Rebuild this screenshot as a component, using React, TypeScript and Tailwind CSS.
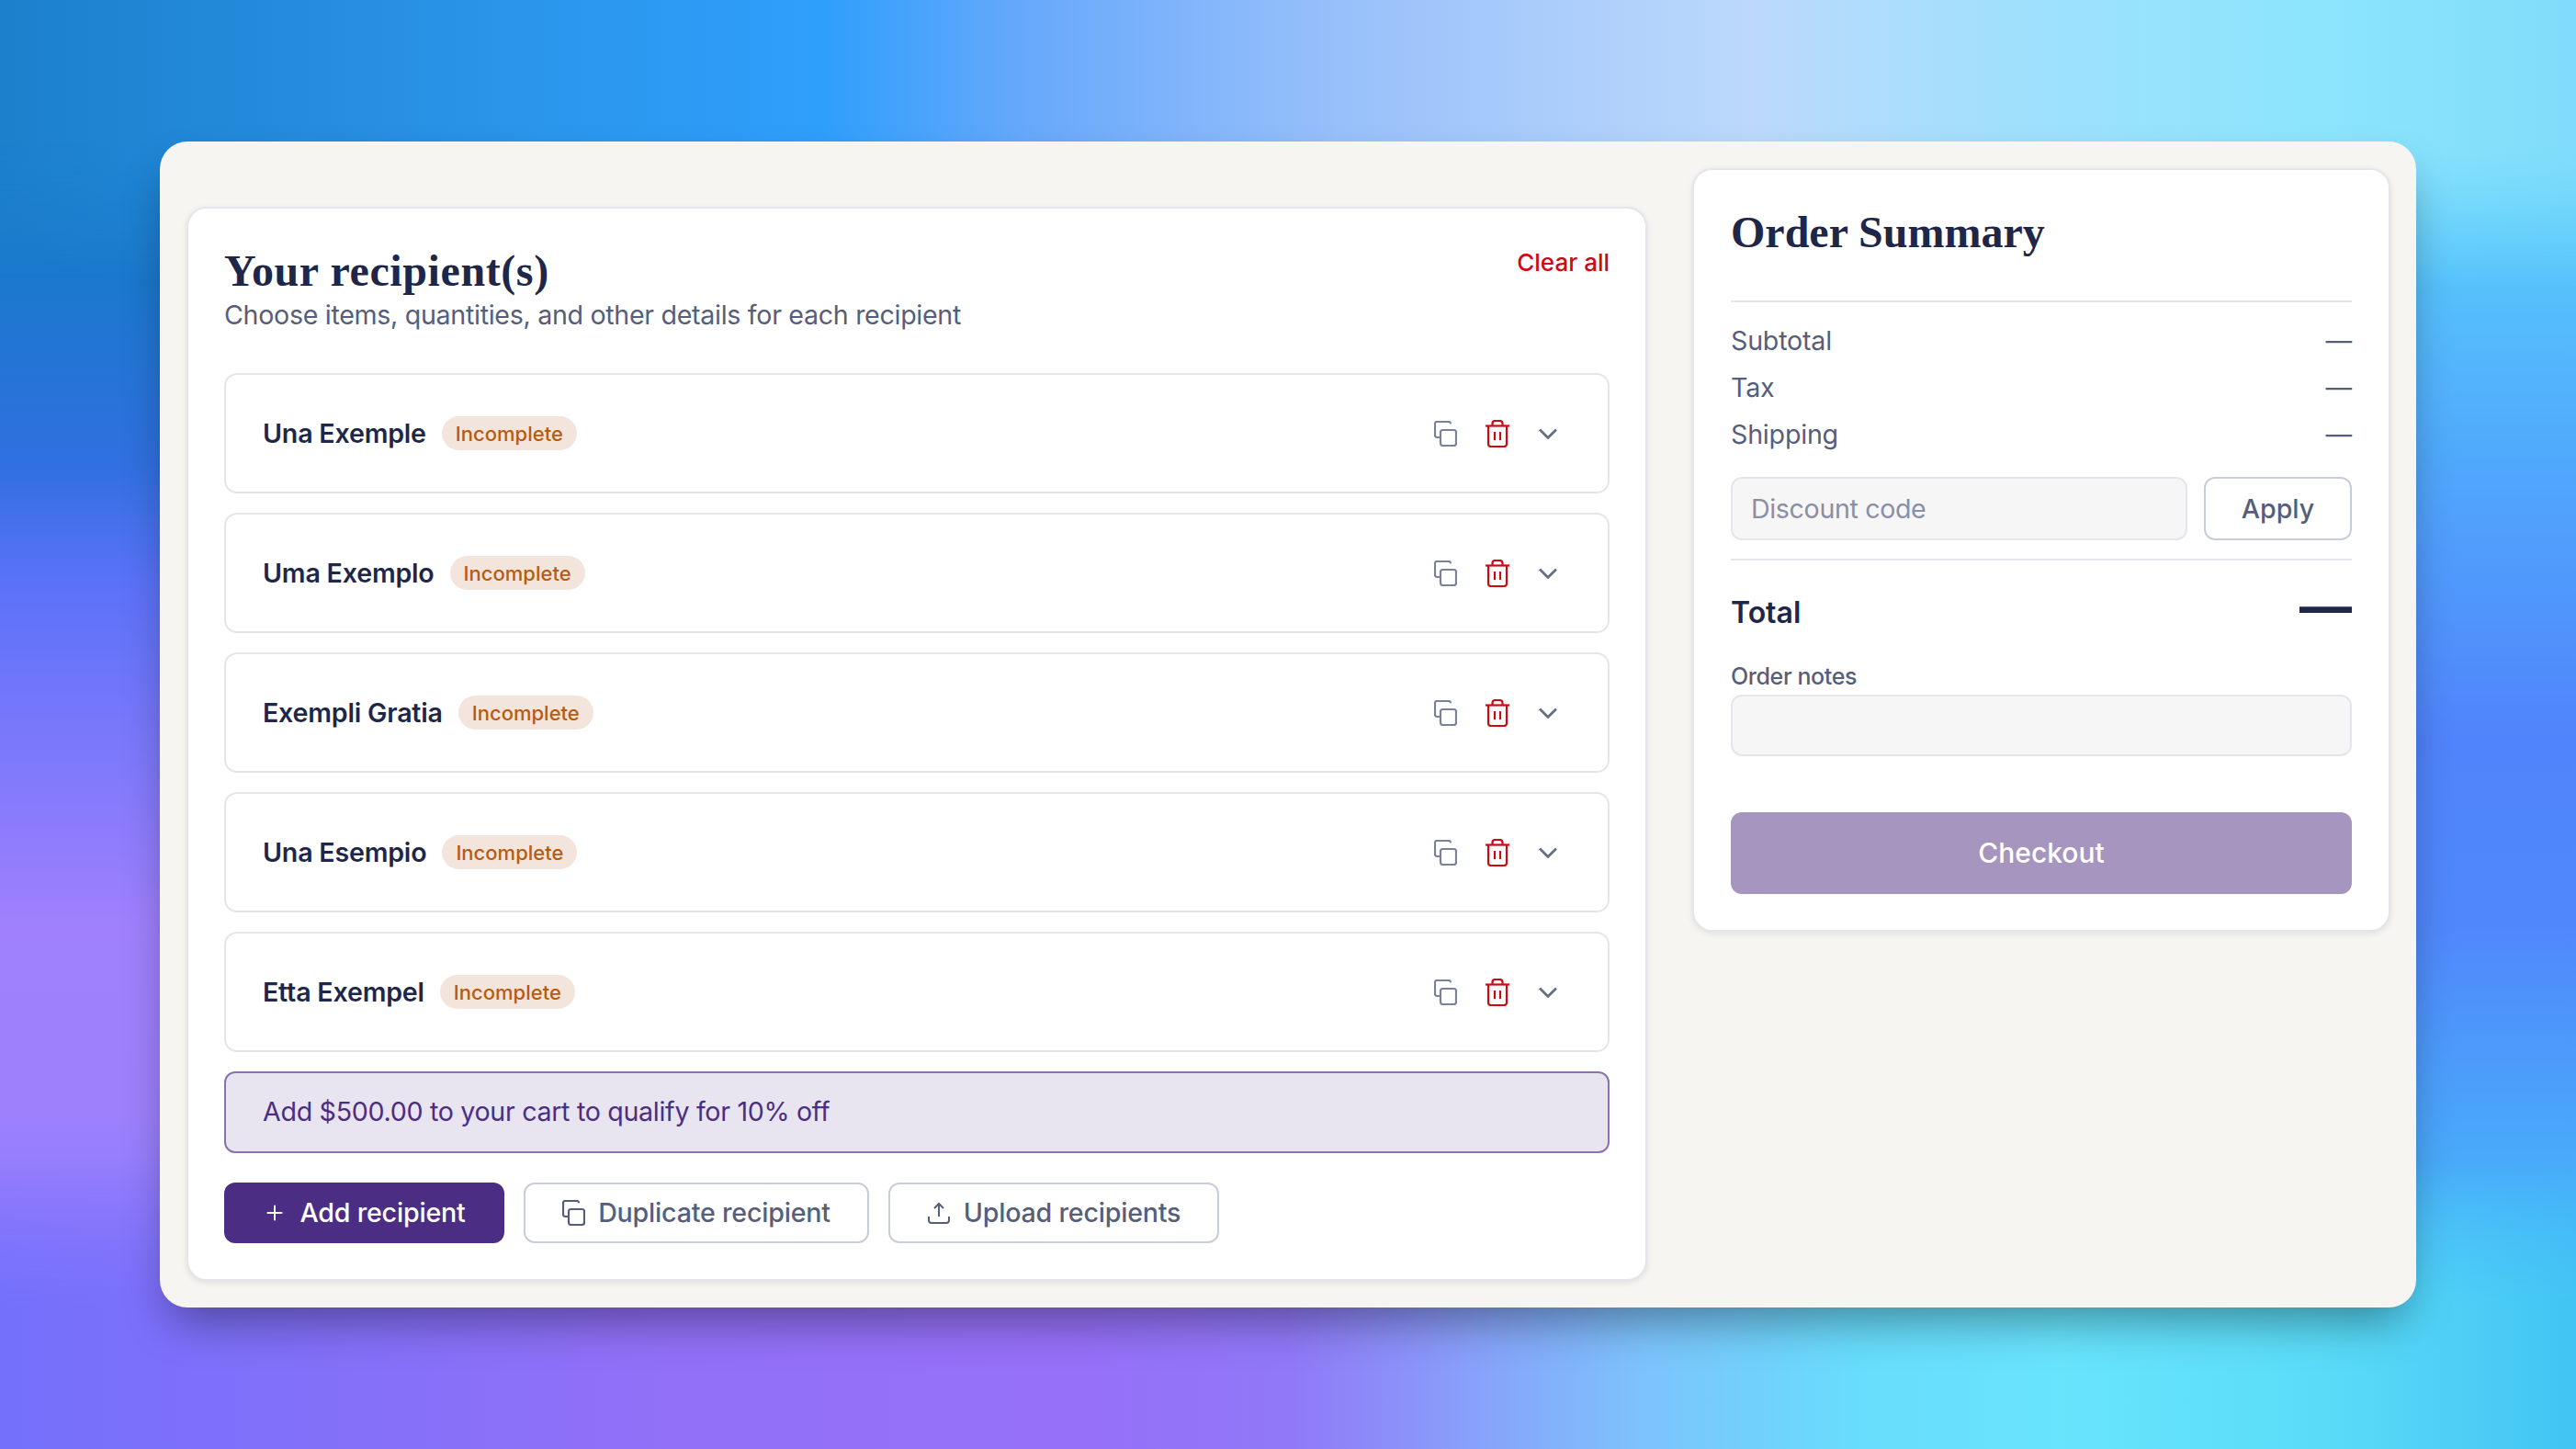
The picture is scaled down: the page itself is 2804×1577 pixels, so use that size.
import React from 'react';
import { Plus } from 'lucide-react';

const recipients = ['Una Exemple', 'Uma Exemplo', 'Exempli Gratia', 'Una Esempio', 'Etta Exempel'];

const CopyIcon = ({ className }: { className?: string }) => (
  <svg viewBox="0 0 25 28" fill="none" stroke="currentColor" strokeWidth="2.2" className={className}>
    <path d="M18 3.2C18 2 17 1 15.8 1H3.2C2 1 1 2 1 3.2v12.6C1 17 2 18 3.2 18H6" />
    <rect x="7" y="10" width="17" height="17" rx="2.4" />
  </svg>
);

const TrashIcon = () => (
  <svg viewBox="0 0 26 30" fill="none" stroke="currentColor" strokeWidth="2.2" className="w-[26px] h-[30px] text-[#cc0a14]">
    <path d="M0 6.5h26" />
    <path d="M7.5 6V4a3 3 0 0 1 3-3h5a3 3 0 0 1 3 3v2" />
    <path d="M3 6.5V26a3 3 0 0 0 3 3h14a3 3 0 0 0 3-3V6.5" />
    <path d="M10 13v9M16 13v9" />
  </svg>
);

const ChevronIcon = () => (
  <svg viewBox="0 0 20 12" fill="none" stroke="currentColor" strokeWidth="2.8" className="w-[20px] h-[12px] text-[#667085]">
    <path d="M1 1.5l9 9 9-9" />
  </svg>
);

const UploadIcon = () => (
  <svg viewBox="0 0 26 26" fill="none" stroke="currentColor" strokeWidth="2" className="w-[26px] h-[26px]">
    <path d="M13 17V3M8 8l5-5 5 5" />
    <path d="M2 17v4a3 3 0 0 0 3 3h16a3 3 0 0 0 3-3v-4" />
  </svg>
);

const RecipientRow = ({ name }: { name: string }) => (
  <div className="h-[131px] rounded-[14px] border-2 border-[#e5e5eb] bg-white pl-[40px] pr-[55px] flex items-center">
    <span className="text-[28.6px] leading-[40px] font-semibold text-[#1e2749] tracking-[-0.2px]">{name}</span>
    <span className="ml-[17px] h-[37px] px-[15px] rounded-full bg-[#f3e5db] text-[#b85a10] text-[22px] leading-[38px] font-medium">
      Incomplete
    </span>
    <div className="ml-auto flex items-center">
      <CopyIcon className="w-[25px] h-[28px] text-[#7a8299]" />
      <div className="ml-[31px]">
        <TrashIcon />
      </div>
      <div className="ml-[32px]">
        <ChevronIcon />
      </div>
    </div>
  </div>
);

const SummaryLine = ({ label }: { label: string }) => (
  <div className="h-[51px] flex items-center justify-between text-[28.6px] tracking-[-0.2px] text-[#565e7a]">
    <span>{label}</span>
    <span>—</span>
  </div>
);

export default function App() {
  return (
    <div className="relative w-full h-[1577px] overflow-hidden pl-[174px] pt-[154px] font-[Inter,sans-serif]">
      {/* background mesh */}
      <div className="absolute inset-0 flex">
        <div className="w-1/2 h-full bg-[linear-gradient(180deg,#1c84d0_0%,#1a78cc_19%,#3070e0_32%,#5a72f8_40%,#7a78fb_51%,#a080fd_64%,#9c80fc_77%,#8878fc_89%,#7470fc_100%)]" />
        <div className="w-1/2 h-full bg-[linear-gradient(180deg,#90e6fd_0%,#80e0fc_6%,#58c8fc_16%,#50a8fc_32%,#5084fc_51%,#5088fc_64%,#48b0fa_83%,#44c8f8_95%,#42c4f4_100%)]" />
      </div>
      <div className="absolute inset-0 bg-[linear-gradient(90deg,#1c80cc_0%,#2a95ea_20%,#2f9ffc_32%,#68a9fb_40%,#98c0fa_52%,#bcd9fc_68%,#a0e0fd_78%,#8ce5fd_90%,#80dcfa_100%)] [mask-image:linear-gradient(180deg,#000_0%,#000_10%,transparent_20%)]" />
      <div className="absolute inset-0 bg-[linear-gradient(90deg,#7470fc_0%,#8070fa_10%,#9270f8_26%,#9670f8_42%,#9078f8_50%,#88a0fa_57%,#7cc4fc_64%,#68dcfc_72%,#68e4fd_80%,#5adcf8_90%,#42c4f4_100%)] [mask-image:linear-gradient(180deg,transparent_80%,#000_90%,#000_100%)]" />

      <div className="relative w-[2456px] h-[1269px] rounded-[30px] bg-[#f6f5f1] pl-[29px] pt-[29px] flex items-start gap-[49px] shadow-[0_25px_50px_-12px_rgba(0,0,0,0.4)]">
        {/* Recipients */}
        <div className="w-[1590px] mt-[42px] rounded-[22px] border-2 border-[#e5e5eb] bg-white px-[39px] pt-[40px] pb-[39px] shadow-[0_2px_6px_rgba(30,30,60,0.1)]">
          <div className="flex items-start justify-between">
            <div>
              <h2 className="font-['Liberation_Serif',serif] font-bold text-[48px] leading-[56px] tracking-[0.6px] text-[#1e2749]">Your recipient(s)</h2>
              <p className="text-[28.6px] leading-[40px] tracking-[-0.3px] text-[#565e7a]">Choose items, quantities, and other details for each recipient</p>
            </div>
            <button className="text-[26px] leading-[38px] font-medium text-[#cc0a14]">Clear all</button>
          </div>

          <div className="mt-[43px] flex flex-col gap-[21px]">
            {recipients.map((name) => (
              <RecipientRow key={name} name={name} />
            ))}
          </div>

          <div className="mt-[21px] h-[89px] rounded-[12px] border-2 border-[#8a72ad] bg-[#e8e5f0] pl-[40px] flex items-center text-[28.6px] tracking-[-0.3px] text-[#4b2e83]">
            Add $500.00 to your cart to qualify for 10% off
          </div>

          <div className="mt-[32px] flex gap-[21px]">
            <button className="w-[305px] h-[66px] rounded-[12px] bg-[#4b2e83] text-white text-[28.6px] tracking-[-0.2px] font-medium flex items-center justify-center gap-[14px]">
              <Plus className="w-[26px] h-[26px]" strokeWidth={1.8} />
              Add recipient
            </button>
            <button className="w-[376px] h-[66px] rounded-[12px] border-2 border-[#c9cdd9] bg-white text-[#565e7a] text-[28.6px] tracking-[-0.2px] font-medium flex items-center justify-center gap-[14px]">
              <CopyIcon className="w-[25px] h-[28px]" />
              Duplicate recipient
            </button>
            <button className="w-[360px] h-[66px] rounded-[12px] border-2 border-[#c9cdd9] bg-white text-[#565e7a] text-[28.6px] tracking-[-0.2px] font-medium flex items-center justify-center gap-[14px]">
              <UploadIcon />
              Upload recipients
            </button>
          </div>
        </div>

        {/* Order summary */}
        <div className="w-[760px] rounded-[22px] border-2 border-[#e5e5eb] bg-white px-[40px] pt-[40px] pb-[39px] shadow-[0_2px_6px_rgba(30,30,60,0.1)]">
          <h2 className="font-['Liberation_Serif',serif] font-bold text-[48px] leading-[56px] text-[#1e2749]">Order Summary</h2>
          <div className="mt-[46px] border-t-2 border-[#e5e5eb]" />
          <div className="mt-[17px]">
            <SummaryLine label="Subtotal" />
            <SummaryLine label="Tax" />
            <SummaryLine label="Shipping" />
          </div>
          <div className="mt-[20px] flex gap-[18px]">
            <input
              placeholder="Discount code"
              className="w-[497px] h-[69px] rounded-[12px] border-2 border-[#e5e5eb] bg-[#f6f6f7] px-[20px] text-[28.6px] tracking-[-0.35px] placeholder:text-[#8a8fa5] outline-none"
            />
            <button className="flex-1 h-[69px] pt-[1px] rounded-[12px] border-2 border-[#c9cdd9] bg-white text-[#565e7a] text-[28.6px] font-medium">Apply</button>
          </div>
          <div className="mt-[20px] border-t-2 border-[#e5e5eb]" />
          <div className="mt-[35px] h-[44px] flex items-center justify-between text-[#1e2749]">
            <span className="text-[32px] font-semibold">Total</span>
            <span className="text-[57px] leading-[44px] font-bold -translate-y-[6px]">—</span>
          </div>
          <label className="block mt-[31px] text-[25px] leading-[32px] tracking-[-0.4px] text-[#565e7a] font-medium">Order notes</label>
          <textarea className="block mt-[4px] w-full h-[67px] rounded-[12px] border-2 border-[#e5e5eb] bg-[#f6f6f7] resize-none outline-none" />
          <button className="mt-[61px] w-full h-[89px] rounded-[12px] bg-[#a695bf] text-white text-[30px] font-medium">Checkout</button>
        </div>
      </div>
    </div>
  );
}
